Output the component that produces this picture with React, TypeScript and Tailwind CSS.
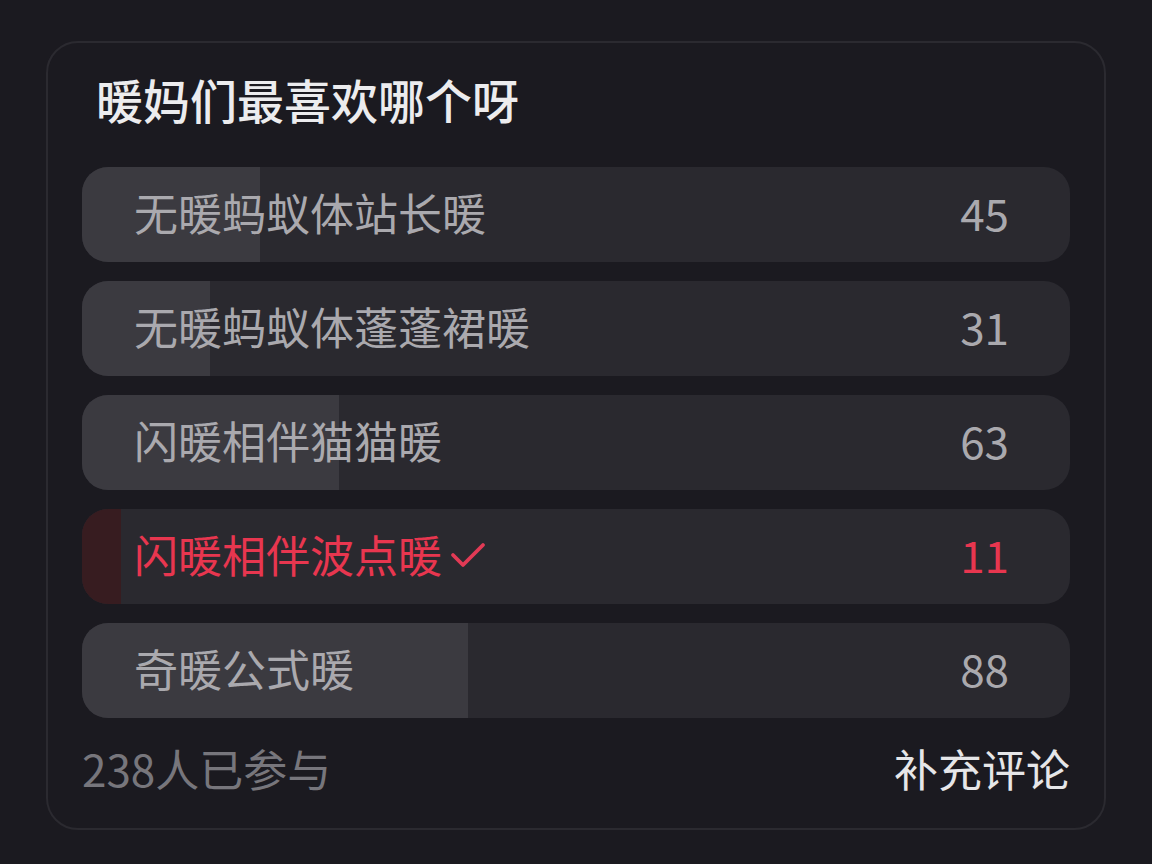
import React from 'react';

const font = { fontFamily: '"Noto Sans CJK SC", "Noto Sans", sans-serif' };

type Option = { label: string; count: number; fill: number; picked?: boolean };

const options: Option[] = [
  { label: '无暖蚂蚁体站长暖', count: 45, fill: 178 },
  { label: '无暖蚂蚁体蓬蓬裙暖', count: 31, fill: 128 },
  { label: '闪暖相伴猫猫暖', count: 63, fill: 257 },
  { label: '闪暖相伴波点暖', count: 11, fill: 39, picked: true },
  { label: '奇暖公式暖', count: 88, fill: 386 },
];

function Check() {
  return (
    <svg width="36" height="32" viewBox="0 0 36 32" className="ml-[8px] shrink-0">
      <path d="M3 17 L13 27 L33 7" fill="none" stroke="#e23a55" strokeWidth="3.8" strokeLinecap="round" strokeLinejoin="round" />
    </svg>
  );
}

function Row({ opt }: { opt: Option }) {
  return (
    <div className="relative h-[95px] rounded-[26px] bg-[#2a292f] overflow-hidden flex items-center pl-[52px] pr-[61px] pb-[6px]">
      <div
        className={`absolute left-0 top-0 bottom-0 ${opt.picked ? 'bg-[#371c20]' : 'bg-[#3b3a40]'}`}
        style={{ width: opt.fill }}
      />
      <div className={`relative flex items-center flex-1 text-[44px] leading-none ${opt.picked ? 'text-[#e8364f]' : 'text-[#aaa9ae]'}`}>
        {opt.label}
        {opt.picked && <Check />}
      </div>
      <div className={`relative text-[44px] leading-none ${opt.picked ? 'text-[#e8364f]' : 'text-[#aaa9ae]'}`}>
        {opt.count}
      </div>
    </div>
  );
}

export default function App() {
  return (
    <div className="w-[1152px] h-[864px] bg-[#1b1a20] pt-[41px] pl-[46px]" style={font}>
      <div className="w-[1060px] h-[789px] rounded-[32px] border-2 border-[#2b2a30] bg-[#1b1a20] px-[34px] relative">
        <div className="pl-[14px] pt-[30px] h-[124px] text-[47px] leading-[52px] text-[#ececee] font-medium">
          暖妈们最喜欢哪个呀
        </div>
        <div className="flex flex-col gap-[19px]">
          {options.map((o) => (
            <Row key={o.label} opt={o} />
          ))}
        </div>
        <div className="flex items-center justify-between mt-[26px] h-[48px] text-[44px] leading-none">
          <span className="text-[#77767c]">238人已参与</span>
          <span className="text-[#e6e6e8]">补充评论</span>
        </div>
      </div>
    </div>
  );
}
